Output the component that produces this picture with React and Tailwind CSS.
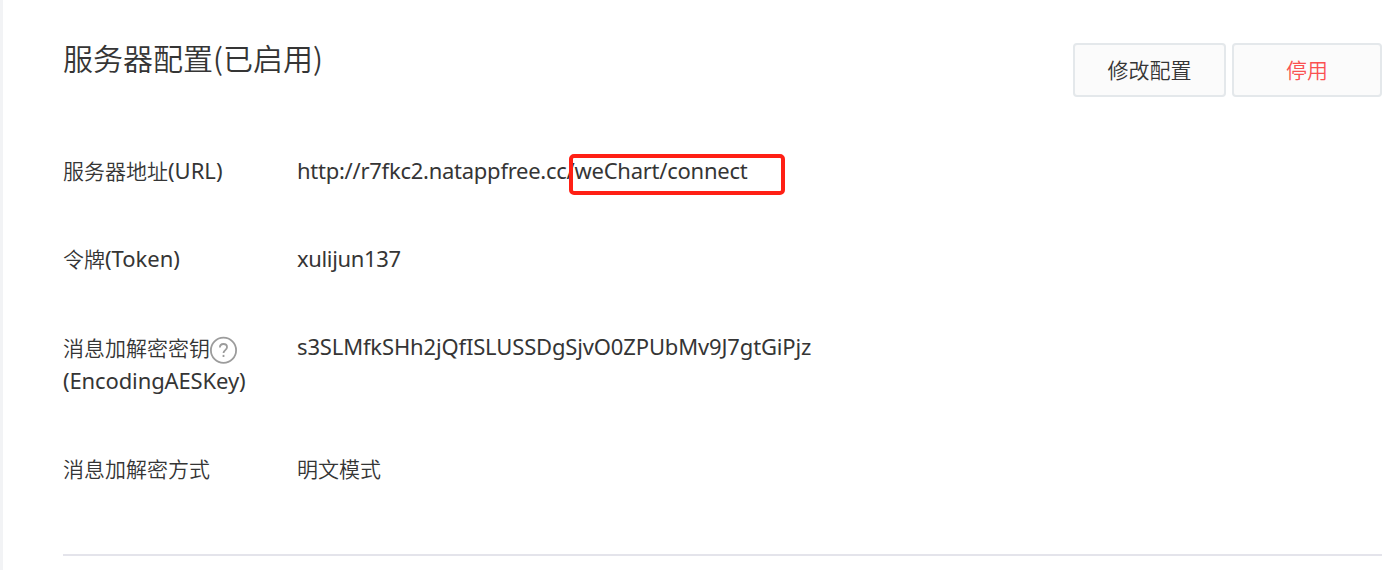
function Row({ label, value, className }) {
  return (
    <div className={"flex items-start " + className}>
      <div className="w-[234px] shrink-0 whitespace-nowrap">{label}</div>
      <div className="whitespace-nowrap">{value}</div>
    </div>
  );
}

function Cjk({ children }) {
  return <span className="font-['Noto_Sans_CJK_SC',sans-serif] text-[21px] font-[350] tracking-normal">{children}</span>;
}

function HelpIcon() {
  return (
    <svg className="relative top-[3px] -left-px h-7 w-7" viewBox="0 0 28 28" fill="none" stroke="#9c9c9c" strokeWidth="1.8">
      <circle cx="14.5" cy="14.3" r="12.6" />
      <path d="M10.9 11.6c0-2.2 1.3-3.6 3.5-3.6s3.6 1.3 3.6 3.3c0 2.7-3.5 2.9-3.5 5.7" />
      <path d="M14.5 18.9v2.1" />
    </svg>
  );
}

export default function App() {
  return (
    <div className="flex h-[570px] w-[1400px] overflow-hidden bg-white font-['Noto_Sans','Noto_Sans_CJK_SC',sans-serif] text-[22px] leading-8 text-[#353535]">
      <div className="w-[3px] shrink-0 bg-[#f2f3f5]" />
      <main className="ml-[60px] flex w-[1319px] flex-col">
        <header className="flex h-[97px] items-start justify-between">
          <h1 className="mt-9 font-['Noto_Sans_CJK_SC',sans-serif] text-[30px] leading-[42px] font-[350]">服务器配置(已启用)</h1>
          <div className="mt-[43px] flex gap-1.5">
            <button className="h-[54px] w-[153px] rounded-[4px] border-2 border-[#e4e8eb] bg-[#fbfbfb] pb-0.5"><Cjk>修改配置</Cjk></button>
            <button className="h-[54px] w-[150px] rounded-[4px] border-2 border-[#e4e8eb] bg-[#fbfbfb] pb-0.5 text-[#fa5151]"><Cjk>停用</Cjk></button>
          </div>
        </header>
        <Row
          className="mt-[57px] h-8"
          label={<><Cjk>服务器地址</Cjk>(URL)</>}
          value={
            <span className="tracking-[-0.26px]">
              http://r7fkc2.natappfree.cc/
              <span className="relative">
                weChart/connect
                <span className="absolute -top-px -left-[6px] h-[41px] w-[216px] rounded-[5px] border-4 border-[#ff2015]" />
              </span>
            </span>
          }
        />
        <Row className="mt-14 h-8" label={<><Cjk>令牌</Cjk>(Token)</>} value={<span className="tracking-[-0.35px]">xulijun137</span>} />
        <Row
          className="mt-14 h-16"
          label={
            <>
              <div className="flex h-[34px] items-center"><Cjk>消息加解密密钥</Cjk><HelpIcon /></div>
              <div className="tracking-[-0.12px]">(EncodingAESKey)</div>
            </>
          }
          value={<span className="tracking-[-0.15px]">s3SLMfkSHh2jQfISLUSSDgSjvO0ZPUbMv9J7gtGiPjz</span>}
        />
        <Row className="mt-[58px] h-8" label={<Cjk>消息加解密方式</Cjk>} value={<Cjk>明文模式</Cjk>} />
        <div className="mt-[70px] h-0.5 bg-[#e4e4eb]" />
      </main>
    </div>
  );
}
